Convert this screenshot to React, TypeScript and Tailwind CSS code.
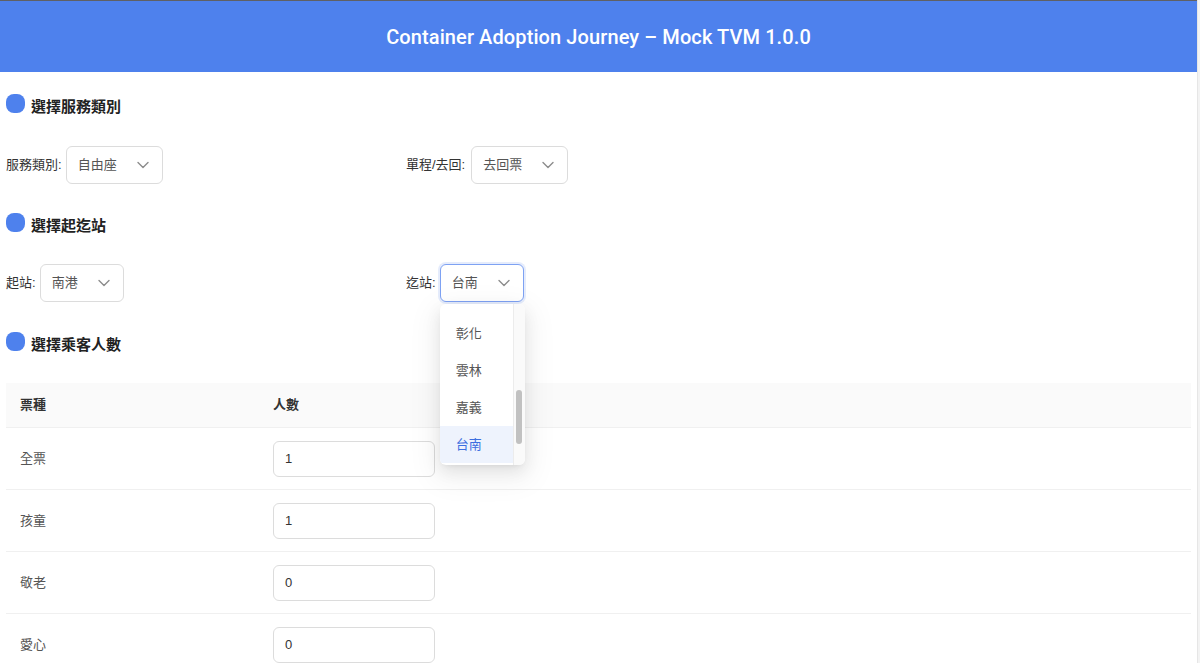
import React from "react";

const F = { fontFamily: '"Liberation Sans", "Noto Sans CJK TC", sans-serif' };

function Chevron() {
  return (
    <svg width="12" height="8" viewBox="0 0 12 8" fill="none">
      <path d="M1 1.5l5 5 5-5" stroke="#8c8c8c" strokeWidth="1.4" strokeLinecap="round" strokeLinejoin="round" />
    </svg>
  );
}

function Select({ value, width, focused, children }: { value: string; width: string; focused?: boolean; children?: React.ReactNode }) {
  return (
    <div className="relative">
      <div
        className={
          "flex h-[38px] items-center justify-between rounded-[6px] border bg-white pl-[11px] pr-[13px] text-[13px] text-[#555] " +
          width +
          (focused ? " border-[#7ea2f3] shadow-[0_0_0_2px_rgba(78,129,237,0.15)]" : " border-[#dcdcdc]")
        }
      >
        <span>{value}</span>
        <Chevron />
      </div>
      {children}
    </div>
  );
}

function Heading({ text }: { text: string }) {
  return (
    <div className="flex h-[19px] items-start gap-[6px]">
      <div className="h-[19px] w-[19px] shrink-0 rounded-[8px] bg-[#4e81ed]" />
      <div className="mt-[3px] text-[15px] font-bold leading-[20px] text-[#222]">{text}</div>
    </div>
  );
}

function Dropdown() {
  const items = ["彰化", "雲林", "嘉義", "台南"];
  return (
    <div className="absolute left-0 top-[40px] z-10 flex h-[161px] w-[85px] overflow-hidden rounded-[6px] bg-white shadow-[0_6px_16px_0_rgba(0,0,0,0.08),0_3px_6px_-4px_rgba(0,0,0,0.12),0_9px_28px_8px_rgba(0,0,0,0.05)]">
      <div className="flex w-[73px] flex-col pt-[11px]">
        {items.map((it) => (
          <div
            key={it}
            className={
              "flex h-[37px] shrink-0 items-center pl-[16px] text-[13px] " +
              (it === "台南" ? "bg-[#eef3fd] text-[#3d6fe0]" : "text-[#555]")
            }
          >
            {it}
          </div>
        ))}
      </div>
      <div className="relative w-[12px] border-l border-[#ececec] bg-[#fafafa]">
        <div className="absolute left-[2px] top-[86px] h-[54px] w-[6px] rounded-full bg-[#c1c1c1]" />
      </div>
    </div>
  );
}

const rows = [
  ["全票", "1"],
  ["孩童", "1"],
  ["敬老", "0"],
  ["愛心", "0"],
];

export default function App() {
  return (
    <div className="flex h-[663px] w-full overflow-hidden bg-white" style={F}>
      <div className="flex min-w-0 flex-1 flex-col">
        <div className="flex h-[72px] shrink-0 items-center justify-center border-t border-[#5f6064] bg-[#4e81ed]">
          <div className="text-[20px] font-medium tracking-[0.1px] text-white" style={{ fontFamily: 'Roboto, "Liberation Sans", sans-serif' }}>
            Container Adoption Journey – Mock TVM 1.0.0
          </div>
        </div>
        <div className="flex flex-col px-[6px]">
          <div className="mt-[22px]">
            <Heading text="選擇服務類別" />
          </div>
          <div className="mt-[33px] flex items-center text-[13px] text-[#333]">
            <div className="flex w-[400px] items-center gap-[4px]">
              <span>服務類別:</span>
              <Select value="自由座" width="w-[97px]" />
            </div>
            <div className="flex items-center gap-[6px]">
              <span>單程/去回:</span>
              <Select value="去回票" width="w-[97px]" />
            </div>
          </div>
          <div className="mt-[29px]">
            <Heading text="選擇起迄站" />
          </div>
          <div className="relative z-10 mt-[32px] flex items-center text-[13px] text-[#333]">
            <div className="flex w-[400px] items-center gap-[4px]">
              <span>起站:</span>
              <Select value="南港" width="w-[84px]" />
            </div>
            <div className="flex items-center gap-[4px]">
              <span>迄站:</span>
              <Select value="台南" width="w-[84px]" focused>
                <Dropdown />
              </Select>
            </div>
          </div>
          <div className="mt-[30px]">
            <Heading text="選擇乘客人數" />
          </div>
          <div className="mt-[32px] text-[13px]">
            <div className="flex h-[45px] items-center border-b border-[#f0f0f0] bg-[#fafafa] font-bold text-[#333]">
              <div className="w-[253px] pl-[14px]">票種</div>
              <div className="pl-[14px]">人數</div>
            </div>
            {rows.map(([n, v]) => (
              <div key={n} className="flex h-[62px] items-center border-b border-[#f0f0f0] text-[#555]">
                <div className="w-[253px] pl-[14px]">{n}</div>
                <div className="pl-[14px]">
                  <div className="flex h-[36px] w-[162px] items-center rounded-[6px] border border-[#dcdcdc] px-[11px] text-[13px] text-[#333]">
                    {v}
                  </div>
                </div>
              </div>
            ))}
          </div>
        </div>
      </div>
      <div className="w-[3px] shrink-0 border-l border-[#e6e6e6] bg-[#f3f3f3]" />
    </div>
  );
}
